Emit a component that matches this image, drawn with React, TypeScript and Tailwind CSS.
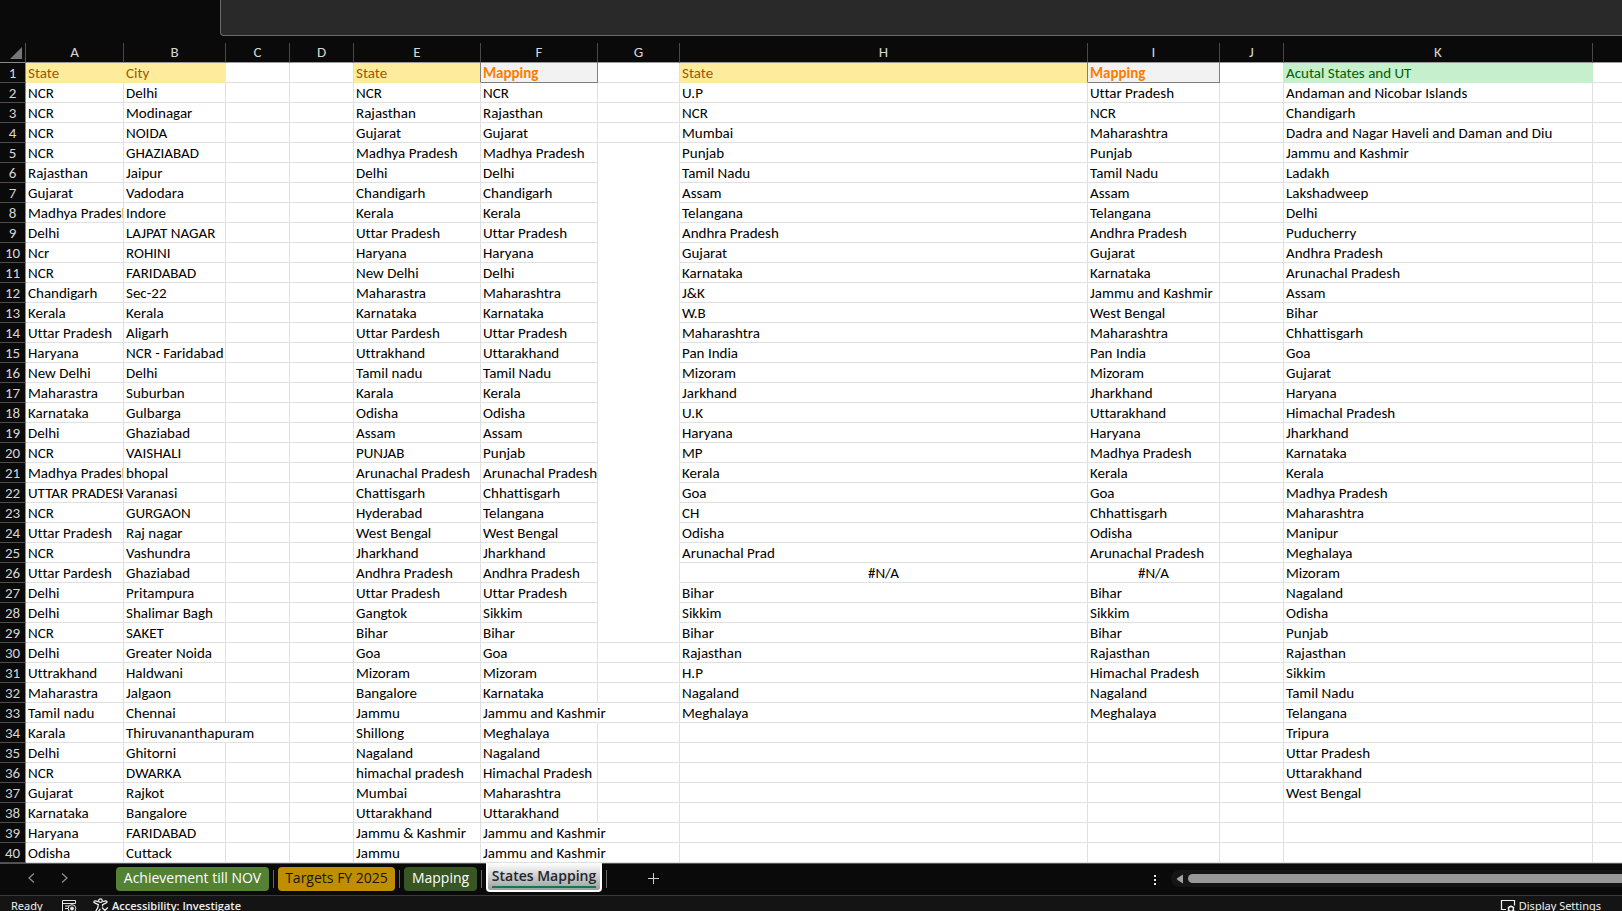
import type { ReactNode } from "react";

const columns = ["A", "B", "C", "D", "E", "F", "G", "H", "I", "J", "K", ""];
const widths = ["w-[98px]", "w-[102px]", "w-16", "w-16", "w-[127px]", "w-[117px]", "w-[82px]", "w-[408px]", "w-[132px]", "w-16", "w-[309px]", ""];

const data: Record<string, string[]> = {
  A: "State|NCR|NCR|NCR|NCR|Rajasthan|Gujarat|Madhya Pradesh|Delhi|Ncr|NCR|Chandigarh|Kerala|Uttar Pradesh|Haryana|New Delhi|Maharastra|Karnataka|Delhi|NCR|Madhya Pradesh|UTTAR PRADESH|NCR|Uttar Pradesh|NCR|Uttar Pardesh|Delhi|Delhi|NCR|Delhi|Uttrakhand|Maharastra|Tamil nadu|Karala|Delhi|NCR|Gujarat|Karnataka|Haryana|Odisha".split("|"),
  B: "City|Delhi|Modinagar|NOIDA|GHAZIABAD|Jaipur|Vadodara|Indore|LAJPAT NAGAR|ROHINI|FARIDABAD|Sec-22|Kerala|Aligarh|NCR - Faridabad|Delhi|Suburban|Gulbarga|Ghaziabad|VAISHALI|bhopal|Varanasi|GURGAON|Raj nagar|Vashundra|Ghaziabad|Pritampura|Shalimar Bagh|SAKET|Greater Noida|Haldwani|Jalgaon|Chennai|Thiruvananthapuram|Ghitorni|DWARKA|Rajkot|Bangalore|FARIDABAD|Cuttack".split("|"),
  E: "State|NCR|Rajasthan|Gujarat|Madhya Pradesh|Delhi|Chandigarh|Kerala|Uttar Pradesh|Haryana|New Delhi|Maharastra|Karnataka|Uttar Pardesh|Uttrakhand|Tamil nadu|Karala|Odisha|Assam|PUNJAB|Arunachal Pradesh|Chattisgarh|Hyderabad|West Bengal|Jharkhand|Andhra Pradesh|Uttar Pradesh|Gangtok|Bihar|Goa|Mizoram|Bangalore|Jammu|Shillong|Nagaland|himachal pradesh|Mumbai|Uttarakhand|Jammu & Kashmir|Jammu".split("|"),
  F: "Mapping|NCR|Rajasthan|Gujarat|Madhya Pradesh|Delhi|Chandigarh|Kerala|Uttar Pradesh|Haryana|Delhi|Maharashtra|Karnataka|Uttar Pradesh|Uttarakhand|Tamil Nadu|Kerala|Odisha|Assam|Punjab|Arunachal Pradesh|Chhattisgarh|Telangana|West Bengal|Jharkhand|Andhra Pradesh|Uttar Pradesh|Sikkim|Bihar|Goa|Mizoram|Karnataka|Jammu and Kashmir|Meghalaya|Nagaland|Himachal Pradesh|Maharashtra|Uttarakhand|Jammu and Kashmir|Jammu and Kashmir".split("|"),
  H: "State|U.P|NCR|Mumbai|Punjab|Tamil Nadu|Assam|Telangana|Andhra Pradesh|Gujarat|Karnataka|J&K|W.B|Maharashtra|Pan India|Mizoram|Jarkhand|U.K|Haryana|MP|Kerala|Goa|CH|Odisha|Arunachal Prad|#N/A|Bihar|Sikkim|Bihar|Rajasthan|H.P|Nagaland|Meghalaya".split("|"),
  I: "Mapping|Uttar Pradesh|NCR|Maharashtra|Punjab|Tamil Nadu|Assam|Telangana|Andhra Pradesh|Gujarat|Karnataka|Jammu and Kashmir|West Bengal|Maharashtra|Pan India|Mizoram|Jharkhand|Uttarakhand|Haryana|Madhya Pradesh|Kerala|Goa|Chhattisgarh|Odisha|Arunachal Pradesh|#N/A|Bihar|Sikkim|Bihar|Rajasthan|Himachal Pradesh|Nagaland|Meghalaya".split("|"),
  K: "Acutal States and UT|Andaman and Nicobar Islands|Chandigarh|Dadra and Nagar Haveli and Daman and Diu|Jammu and Kashmir|Ladakh|Lakshadweep|Delhi|Puducherry|Andhra Pradesh|Arunachal Pradesh|Assam|Bihar|Chhattisgarh|Goa|Gujarat|Haryana|Himachal Pradesh|Jharkhand|Karnataka|Kerala|Madhya Pradesh|Maharashtra|Manipur|Meghalaya|Mizoram|Nagaland|Odisha|Punjab|Rajasthan|Sikkim|Tamil Nadu|Telangana|Tripura|Uttar Pradesh|Uttarakhand|West Bengal".split("|"),
};

const rows = Array.from({ length: 40 }, (_, i) => i + 1);
const spills = new Set(["B34", "F33", "F39", "F40"]);

function cellClass(col: string, row: number) {
  const id = col + row;
  if (row === 1) {
    if (col === "A" || col === "B") return "overflow-hidden border-[#ffeb9c] bg-[#ffeb9c] text-[#9c5700]";
    if (col === "E" || col === "H") return "overflow-hidden border-b-[#ffeb9c] border-r-[#7f7f7f] bg-[#ffeb9c] text-[#9c5700]";
    if (col === "F" || col === "I") return "overflow-hidden border-[#7f7f7f] bg-[#f2f2f2] font-bold text-[#fa7d00]";
    if (col === "K") return "overflow-hidden border-[#c6efce] bg-[#c6efce] text-[#006100]";
  }
  if (spills.has(id)) return "border-b-[#e0e0e0] border-r-transparent";
  // Rows 5 to 28 of the spacer column carry no horizontal rules.
  if (col === "G" && row >= 5 && row <= 28) return "border-b-transparent border-r-[#e0e0e0]";
  if (data[col]?.[row - 1] === "#N/A") return "overflow-hidden border-[#e0e0e0] text-center";
  if (data[col]?.[row - 1]) return "overflow-hidden border-[#e0e0e0]";
  return "border-[#e0e0e0]";
}

function Grid() {
  return (
    <table className="w-full table-fixed border-separate border-spacing-0 bg-white font-[Carlito,Calibri,Lato,sans-serif] text-[15px] leading-[19px] text-black [font-variant-ligatures:none]">
      <colgroup>
        <col className="w-[26px]" />
        {widths.map((w, i) => (
          <col key={i} className={w} />
        ))}
      </colgroup>
      <thead>
        <tr className="h-5 bg-[#0a0a0a] text-[#d6d6d6]">
          <th className="border-r border-b border-[#8a8a8a] border-r-[#555] p-0" aria-label="Select all">
            <svg viewBox="0 0 25 19" className="block h-[19px] w-full">
              <path d="M22 4v12H10z" fill="#767676" />
            </svg>
          </th>
          {columns.map((c, i) => (
            <th key={i} scope="col" className="border-r border-b border-r-[#484848] border-b-[#9a9a9a] p-0 text-center font-normal last:border-r-0">
              {c}
            </th>
          ))}
        </tr>
      </thead>
      <tbody className="leading-[17px]">
        {rows.map((r) => (
          <tr key={r} className="h-5">
            <th scope="row" className="border-r border-b border-r-[#8a8a8a] border-b-[#4d4d4d] bg-[#0a0a0a] px-0 pt-0.5 pb-0 text-center font-normal text-[#d6d6d6]">
              {r}
            </th>
            {columns.map((c, i) => (
              <td
                key={i}
                className={`border-r border-b pt-0.5 pr-0 pb-0 whitespace-nowrap last:border-r-0 ${data[c]?.[r - 1] === "#N/A" ? "pl-0" : "pl-[2px]"} ${cellClass(c, r)}`}
              >
                {data[c]?.[r - 1]}
              </td>
            ))}
          </tr>
        ))}
      </tbody>
    </table>
  );
}

function Tab({ className, children }: { className: string; children: ReactNode }) {
  return (
    <>
      <button type="button" className={`mt-[3px] h-6 shrink-0 rounded-[4px] pb-0.5 text-[14px] leading-[22px] whitespace-nowrap ${className}`}>
        {children}
      </button>
      <span className="mx-1 mt-1.5 h-[18px] w-px shrink-0 bg-[#666]" />
    </>
  );
}

function SheetTabs() {
  return (
    <nav aria-label="Sheets" className="flex h-[33px] items-start border-t border-b border-t-[#555] border-b-[#3a3a3a] bg-[#0a0a0a]">
      <div className="flex w-[116px] shrink-0 gap-[17px] pt-1.5 pl-6">
        <button type="button" aria-label="Previous sheets" className="size-4">
          <svg viewBox="0 0 16 16" fill="none" stroke="#8c8c8c" strokeWidth="1.3"><path d="M10 3.5 5 8l5 4.5" /></svg>
        </button>
        <button type="button" aria-label="Next sheets" className="size-4">
          <svg viewBox="0 0 16 16" fill="none" stroke="#8c8c8c" strokeWidth="1.3"><path d="m5 3.5 5 4.5-5 4.5" /></svg>
        </button>
      </div>
      <Tab className="w-[153px] bg-[#548235] text-white">Achievement till NOV</Tab>
      <Tab className="w-[117px] bg-[#bf8f00] text-[#1c1600]">Targets FY 2025</Tab>
      <Tab className="w-[73px] bg-[#375623] text-white">Mapping</Tab>
      <button type="button" aria-current="page" className="-mt-px flex h-[29px] w-[116px] shrink-0 justify-center rounded-b-[4px] border-2 border-t-0 border-white bg-linear-to-b from-white to-[#9c9ea3] text-[14px] font-semibold text-[#262626]">
        <span className="h-[25px] border-b-2 border-[#107c41] leading-[25px] whitespace-nowrap">States Mapping</span>
      </button>
      <span className="mx-1 mt-1.5 h-[18px] w-px shrink-0 bg-[#666]" />
      <button type="button" aria-label="New sheet" className="mt-1.5 ml-[34px] size-4 shrink-0">
        <svg viewBox="0 0 16 16" stroke="#d0d0d0" strokeWidth="1"><path d="M8.5 3v11M3 8.5h11" /></svg>
      </button>
      <div className="ml-auto flex w-[471px] shrink-0 items-start pt-1.5">
        <button type="button" aria-label="Resize tabs" className="mt-1 h-3 w-5">
          <svg viewBox="0 0 20 12" fill="#e6e6e6"><path d="M3 1h2v2H3zM3 5h2v2H3zM3 9h2v2H3z" /></svg>
        </button>
        <div className="flex h-[17px] flex-1 items-center rounded-l-full bg-[#151515] pl-[5px]">
          <svg viewBox="0 0 12 10" className="h-2.5 w-3 shrink-0" fill="#a0a0a0"><path d="M7 .5v9L1.500 6Q0 5 1.500 4z" /></svg>
          <div className="h-[9px] flex-1 rounded-l-full bg-[#999]" />
        </div>
      </div>
    </nav>
  );
}

function StatusBar() {
  return (
    <footer className="flex h-[21px] items-center bg-[#141414] pl-[11px] font-['Noto_Sans',sans-serif] text-[11px] text-[#f0f0f0]">
      <span className="w-[51px]">Ready</span>
      <svg viewBox="0 0 16 16" className="size-4" fill="none" stroke="#e6e6e6">
        <path d="M4.500 12.500H.5v-11h13v3M.5 4.500h13M3 7h4M3 9.500h3" />
        <circle cx="10" cy="9.500" r="3.800" />
        <circle cx="10" cy="9.500" r="1.500" fill="#e6e6e6" />
      </svg>
      <svg viewBox="0 0 16 16" className="ml-[15px] size-[17px]" fill="none" stroke="#f0f0f0" strokeWidth="1.200">
        <circle cx="7" cy="2.500" r="1.700" />
        <path d="M5 3.500 2 2.700Q.6 2.700 1 4.200L5 6.200 4.500 9l-2 3.700q0 1.600 1.500 1.300L7 10.200M9 3.500l3-.8q1.500.1 1 1.500L9 6.200V8M8.500 9l5.500 5.500M14 9l-5.500 5.500" />
      </svg>
      <span className="ml-0.5 font-['Open_Sans','Noto_Sans',sans-serif] font-semibold">Accessibility: Investigate</span>
      <button type="button" className="mr-[21px] ml-auto flex items-center gap-[3px] whitespace-nowrap">
        <svg viewBox="0 0 16 16" className="size-4" fill="none" stroke="#f0f0f0">
          <path d="M6 10.500H1.500v-9h13v5" strokeWidth="1.200" />
          <circle cx="11" cy="10" r="2.500" strokeWidth="1.400" />
          <path d="M11 6.500v1.300M11 12.200v1.300M7.800 8.200l1.200.7M13 11.100l1.200.7M7.800 11.800l1.200-.7M13 8.900l1.200-.7" strokeWidth="1.200" />
        </svg>
        Display Settings
      </button>
    </footer>
  );
}

export default function App() {
  return (
    <main className="h-screen overflow-hidden bg-[#0a0a0a] font-['Open_Sans','Noto_Sans',sans-serif]">
      <div className="h-[43px] pl-[220px]">
        <textarea aria-label="Formula bar" className="block h-9 w-full resize-none rounded-bl-[4px] border-b border-l border-[#6a6a6a] bg-[#292929] px-2 text-[15px] text-white outline-none" />
      </div>
      <Grid />
      <SheetTabs />
      <StatusBar />
    </main>
  );
}
